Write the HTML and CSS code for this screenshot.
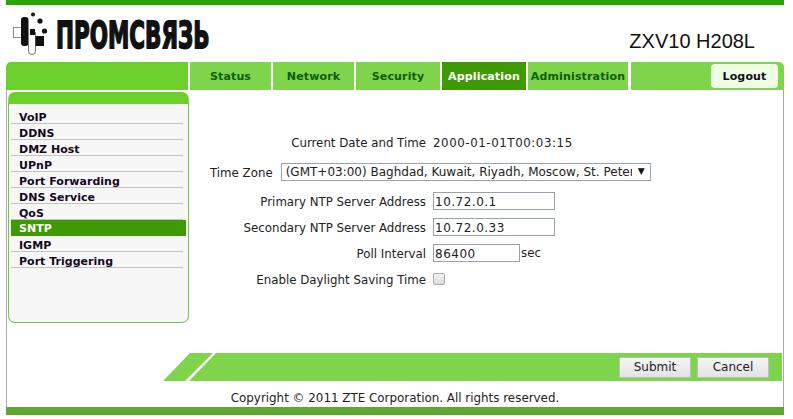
FILE: index.html
```html
<!DOCTYPE html>
<html lang="en">
<head>
<meta charset="utf-8">
<title>ZXV10 H208L</title>
<link rel="stylesheet" href="styles.css">
</head>
<body>
<div class="page">
  <div class="topbar"></div>
  <header class="header">
    <svg class="logo" width="210" height="57" viewBox="0 0 210 57" aria-label="Promsvyaz">
      <rect x="7.5" y="22.5" width="9" height="10" fill="#fff" stroke="#8a8a8a"/>
      <rect x="15" y="12" width="7.5" height="29" rx="3" fill="#111"/>
      <path d="M22.5 26V46a3.5 3.5 0 0 0 7 0V27" fill="#fff" stroke="#777"/>
      <rect x="29.5" y="31" width="8.5" height="10" fill="#111"/>
      <rect x="24" y="24" width="5" height="6" fill="#111"/>
      <circle cx="27" cy="9.5" r="2" fill="#111"/>
      <circle cx="34" cy="16" r="2.6" fill="#111"/>
      <circle cx="38.5" cy="26" r="2.6" fill="#111"/>
      <text class="logo-text" transform="translate(50 42.5) scale(0.565 1)">ПРОМСВЯЗЬ</text>
    </svg>
    <div class="model">ZXV10 H208L</div>
  </header>
  <nav class="nav">
    <div class="nav-lead"></div>
    <a class="tab tab-status">Status</a>
    <a class="tab tab-network">Network</a>
    <a class="tab tab-security">Security</a>
    <a class="tab tab-app active">Application</a>
    <a class="tab tab-admin">Administration</a>
    <div class="nav-end"><a class="logout">Logout</a></div>
  </nav>
  <main class="main">
    <div class="content">
      <aside class="sidebar">
        <ul class="menu">
          <li>VoIP</li>
          <li>DDNS</li>
          <li>DMZ Host</li>
          <li>UPnP</li>
          <li>Port Forwarding</li>
          <li>DNS Service</li>
          <li>QoS</li>
          <li class="current">SNTP</li>
          <li>IGMP</li>
          <li>Port Triggering</li>
        </ul>
      </aside>
      <form class="form">
        <div class="row row-date"><span class="label">Current Date and Time</span><span class="value">2000-01-01T00:03:15</span></div>
        <div class="row row-zone">
          <span class="zone-label">Time Zone</span>
          <div class="select-wrap">
            <select class="select"><option>(GMT+03:00) Baghdad, Kuwait, Riyadh, Moscow, St. Petersburg, Volgograd</option></select>
            <span class="arrow">▼</span>
          </div>
        </div>
        <div class="row row-ip"><span class="label">Primary NTP Server Address</span><input class="input wide" value="10.72.0.1"></div>
        <div class="row row-next"><span class="label">Secondary NTP Server Address</span><input class="input wide" value="10.72.0.33"></div>
        <div class="row row-next"><span class="label">Poll Interval</span><input class="input short" value="86400"><span class="unit">sec</span></div>
        <div class="row row-next"><span class="label">Enable Daylight Saving Time</span><span class="check"></span></div>
      </form>
    </div>
    <div class="band">
      <svg class="band-slant" width="53" height="28" viewBox="0 0 53 28"><polygon points="0,28 27,0 50,0 22,28" fill="#7ed44b"/><polygon points="26,28 53,0 53,28" fill="#7ed44b"/></svg>
      <div class="band-body">
        <button type="button" class="btn">Submit</button>
        <button type="button" class="btn">Cancel</button>
      </div>
    </div>
    <footer class="copy">Copyright © 2011 ZTE Corporation. All rights reserved.</footer>
  </main>
  <div class="bottombar"></div>
</div>
</body>
</html>
```
FILE: styles.css
```css
* { box-sizing: border-box; }
html, body { margin: 0; padding: 0; background: #fff; }
body { font: 12px "DejaVu Sans", Verdana, sans-serif; color: #222; overflow: hidden; }
.page { width: 778px; margin-left: 6px; }
.topbar { height: 5px; background: #2ba402; }
.header { height: 57px; position: relative; display: flex; justify-content: space-between; }
.logo { display: block; overflow: visible; flex: none; }
.logo-text { font: 900 38px "DejaVu Sans", sans-serif; fill: #111; stroke: #111; stroke-width: 1.8px; }
.model { font: 20px "Liberation Sans", Arial, sans-serif; color: #111; padding: 24px 29px 0 0; line-height: 24px; }

.nav { display: flex; height: 28px; font-weight: bold; font-size: 11px; letter-spacing: 0.15px; }
.nav-lead { width: 182px; margin-right: 2px; background: #6ccf2c; border-radius: 5px 0 0 0; }
.tab { background: #7ed44b; color: #0f5c0a; display: flex; align-items: center; justify-content: center; margin-right: 2px; padding-top: 1px; }
.tab-status, .tab-network { width: 81px; }
.tab-security { width: 84px; }
.tab-app { width: 84px; }
.tab-admin { width: 100px; margin-right: 3px; }
.tab.active { background: #3f9a02; color: #fff; }
.nav-end { flex: 1; background: #7ed44b; border-radius: 0 5px 0 0; display: flex; justify-content: flex-end; align-items: center; padding-right: 6px; }
.logout { width: 67px; height: 24px; background: #f0fbe6; border-radius: 4px; color: #111; display: flex; align-items: center; justify-content: center; }

.main { height: 317px; border-left: 1px solid #aaa; border-right: 1px solid #aaa; display: flex; flex-direction: column; }
.content { display: flex; height: 263px; padding-top: 2px; }
.sidebar { width: 181px; height: 231px; margin-left: 1px; background: #f7f7f7; border: 1px solid #74c74a; border-top: 12px solid #6ccf2c; border-radius: 7px; padding-top: 4px; flex: none; position: relative; }
.sidebar::before { content: ""; position: absolute; left: 0; right: 0; top: 0; height: 6px; background: #f7f7f7; border-radius: 6px 6px 0 0; }
.menu { list-style: none; margin: 0; padding: 0 2px; position: relative; font-weight: bold; font-size: 11px; letter-spacing: 0.02px; color: #16081e; }
.menu li { height: 16px; line-height: 16px; padding: 2px 0 0 8px; border-bottom: 1px solid #c4c4c4; margin-right: 3px; }
.menu li.current { background: #3f9a02; color: #fff; border-bottom: none; margin-right: 0; padding-top: 1px; }

.form { flex: 1; padding-top: 40px; font-size: 11.8px; }
.row { display: flex; align-items: center; height: 18px; }
.label { width: 237px; text-align: right; margin-right: 7px; flex: none; padding-top: 1px; }
.value { letter-spacing: 0.58px; padding-top: 1px; }
.row-zone { margin-top: 11px; padding-left: 21px; }
.zone-label { padding-top: 1px; }
.row-date { height: 20px; }
.row-ip { margin-top: 11px; }
.row-next { margin-top: 8px; }
.select-wrap { position: relative; margin-left: 8px; width: 370px; height: 18px; }
.select { appearance: none; -webkit-appearance: none; width: 100%; height: 18px; border: 1px solid #9aa3ad; border-radius: 0; background: #fff; font: 12px "DejaVu Sans", Verdana, sans-serif; color: #222; padding: 0 18px 0 4px; }
.arrow { position: absolute; right: 6px; top: 2px; font-size: 9px; line-height: 12px; color: #111; }
.input { height: 18px; border: 1px solid #9aa3ad; font: 12px "DejaVu Sans", Verdana, sans-serif; letter-spacing: 0.5px; color: #222; padding: 2px 1px 0; background: #fff; border-radius: 0; }
.wide { width: 122px; }
.short { width: 87px; }
.unit { margin-left: 1px; }
.check { width: 12px; height: 12px; border: 1px solid #a8a8a8; border-radius: 2px; background: linear-gradient(#f2f2f2, #dcdcdc); }

.band { display: flex; height: 28px; padding-left: 156px; }
.band-slant { flex: none; display: block; }
.band-body { flex: 1; background: #7ed44b; display: flex; justify-content: flex-end; align-items: center; gap: 6px; padding-right: 13px; margin-right: 1px; }
.btn { width: 72px; height: 21px; border: 1px solid #bdbdbd; background: linear-gradient(#f6f6f6, #e2e2e2); font: 12px "DejaVu Sans", Verdana, sans-serif; color: #222; padding: 0; border-radius: 1px; }
.copy { text-align: center; height: 26px; line-height: 35px; color: #222; font-size: 11.9px; }
.bottombar { height: 8px; background: #5fa830; }
```
